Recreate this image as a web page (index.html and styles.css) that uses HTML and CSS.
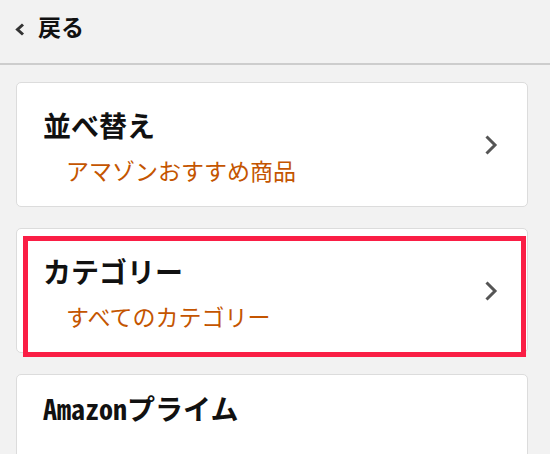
FILE: index.html
```html
<!DOCTYPE html>
<html lang="ja">
<head>
<meta charset="utf-8">
<link rel="stylesheet" href="styles.css">
</head>
<body>
<header class="topbar">
  <svg class="back-icon" width="10" height="13" viewBox="0 0 10 13"><polyline points="8,1.5 2.5,6.5 8,11.5" fill="none" stroke="#333" stroke-width="3"/></svg>
  <span class="back-label">戻る</span>
</header>
<main class="list">
  <div class="card">
    <div class="card-text">
      <div class="card-title">並べ替え</div>
      <div class="card-sub">アマゾンおすすめ商品</div>
    </div>
    <svg class="chev" width="14" height="22" viewBox="0 0 14 22"><polyline points="2.5,2.5 11,11 2.5,19.5" fill="none" stroke="#555" stroke-width="3"/></svg>
  </div>
  <div class="card">
    <div class="card-text">
      <div class="card-title">カテゴリー</div>
      <div class="card-sub">すべてのカテゴリー</div>
    </div>
    <svg class="chev" width="14" height="22" viewBox="0 0 14 22"><polyline points="2.5,2.5 11,11 2.5,19.5" fill="none" stroke="#555" stroke-width="3"/></svg>
  </div>
  <div class="card card-short">
    <div class="card-text">
      <div class="card-title"><span class="halfwidth">Amazon</span>プライム</div>
    </div>
  </div>
</main>
<div class="highlight"></div>
</body>
</html>
```
FILE: styles.css
```css
html, body {
  margin: 0;
  padding: 0;
  background: #f2f2f2;
  font-family: "Noto Sans CJK JP", "Noto Sans", sans-serif;
  color: #111;
  overflow: hidden;
}
.topbar {
  height: 65px;
  border-bottom: 2px solid #cdcdcd;
  display: flex;
  align-items: flex-start;
  padding: 11px 0 0 15px;
  box-sizing: border-box;
}
.back-icon {
  margin-top: 12px;
  margin-right: 13px;
}
.back-label {
  font-size: 23px;
  font-weight: bold;
  line-height: 30px;
  color: #111;
}
.list {
  padding: 17px 22px 0 16px;
  display: flex;
  flex-direction: column;
  gap: 21px;
}
.card {
  background: #fff;
  border: 1px solid #dcdcdc;
  border-radius: 5px;
  height: 125px;
  box-sizing: border-box;
  display: flex;
  align-items: center;
  padding: 0 29px 0 26px;
}
.card-text {
  flex: 1;
  align-self: flex-start;
  padding-top: 25px;
}
.card-title {
  font-size: 28px;
  font-weight: bold;
  line-height: 35px;
  color: #111;
}
.halfwidth {
  font-feature-settings: "hwid" 1;
  font-weight: 600;
}
.card-sub {
  font-size: 23px;
  line-height: 30px;
  margin-top: 12px;
  padding-left: 23px;
  color: #c45500;
}
.card-short .card-text {
  padding-top: 16px;
}
.chev {
  display: block;
}
.highlight {
  position: absolute;
  left: 23px;
  top: 236px;
  width: 503px;
  height: 121px;
  border: 5px solid #fa1e45;
  box-sizing: border-box;
}
```
